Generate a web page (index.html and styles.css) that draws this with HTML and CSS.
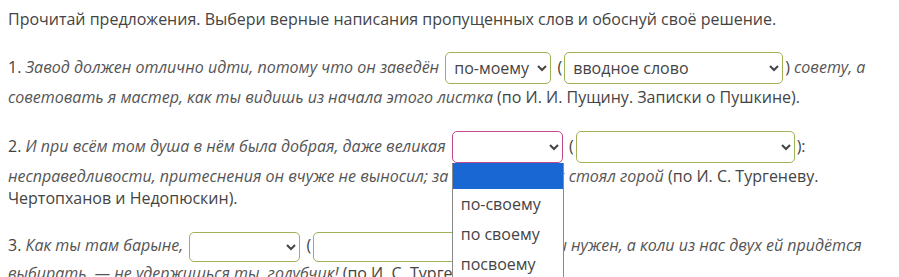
FILE: index.html
```html
<!DOCTYPE html>
<html lang="ru">
<head>
    <meta charset="UTF-8">
    <meta name="viewport" content="width=device-width, initial-scale=1.0">
    <title>Выбери верные написания</title>
    <link rel="stylesheet" href="styles.css">
</head>
<body>

    <div class="task">
        <p class="intro">Прочитай предложения. Выбери верные написания пропущенных слов и обоснуй своё решение.</p>

        <p class="item">1. <i>Завод должен отлично идти, потому что он заведён</i>
            <select class="gap gap-word"><option>по-моему</option></select> (<select class="gap gap-reason"><option>вводное слово</option></select>) <i>совету, а советовать я мастер, как ты видишь из начала этого листка</i> (по И. И. Пущину. Записки о Пушкине).</p>

        <p class="item">2. <i>И при всём том душа в нём была добрая, даже великая</i>
            <span class="open-select"><select class="gap gap-word wide focused"><option></option></select><span class="dropdown">
                <span class="opt picked"></span>
                <span class="opt">по-своему</span>
                <span class="opt">по своему</span>
                <span class="opt">посвоему</span>
            </span></span> (<select class="gap gap-reason"><option></option></select>): <i>несправедливости, притеснения он вчуже не выносил; за мужиков своих стоял горой</i> (по И. С. Тургеневу. Чертопханов и Недопюскин).</p>

        <p class="item last">3. <i>Как ты там барыне,</i>
            <select class="gap gap-word wide"><option></option></select> (<select class="gap gap-reason long"><option></option></select>) <i>ни нужен, а коли из нас двух ей придётся выбирать, — не удержишься ты, голубчик!</i> (по И. С. Тургеневу. Муму).</p>
    </div>

</body>
</html>
```

FILE: styles.css
```css
body {
    margin: 0;
    padding: 8px;
    font-family: "Open Sans", Arial, sans-serif;
    font-size: 16px;
    color: #444;
    background: #fff;
}

.task p {
    margin: 0;
    line-height: 22px;
}

.intro {
    margin-bottom: 22px !important;
}

.item {
    margin-bottom: 23px !important;
}

i {
    color: #555;
}

.gap {
    height: 32px;
    font-family: "Open Sans", Arial, sans-serif;
    font-size: 16px;
    color: #444;
    background: #fff;
    border: 1px solid #9db356;
    border-radius: 5px;
    padding: 0 4px;
    margin: 0 2px 2px;
    vertical-align: middle;
}

.last .gap {
    height: 30px;
    margin-bottom: 0;
}

.gap-word {
    width: 106px;
}

.gap-word.wide {
    width: 111px;
}

.gap-reason {
    width: 219px;
}

.gap-reason.long {
    width: 224px;
}

.gap.focused {
    border-color: #c2498f;
}

.open-select {
    position: relative;
    display: inline-block;
}

.dropdown {
    position: absolute;
    top: 32px;
    left: 2px;
    width: 110px;
    background: #fff;
    border: 1px solid #8a8a8a;
    border-top: none;
    display: flex;
    flex-direction: column;
    z-index: 2;
}

.opt {
    height: 30px;
    line-height: 30px;
    padding: 0 8px;
    color: #444;
    font-style: normal;
}

.opt.picked {
    height: 26px;
    background: #1967d2;
}
```
